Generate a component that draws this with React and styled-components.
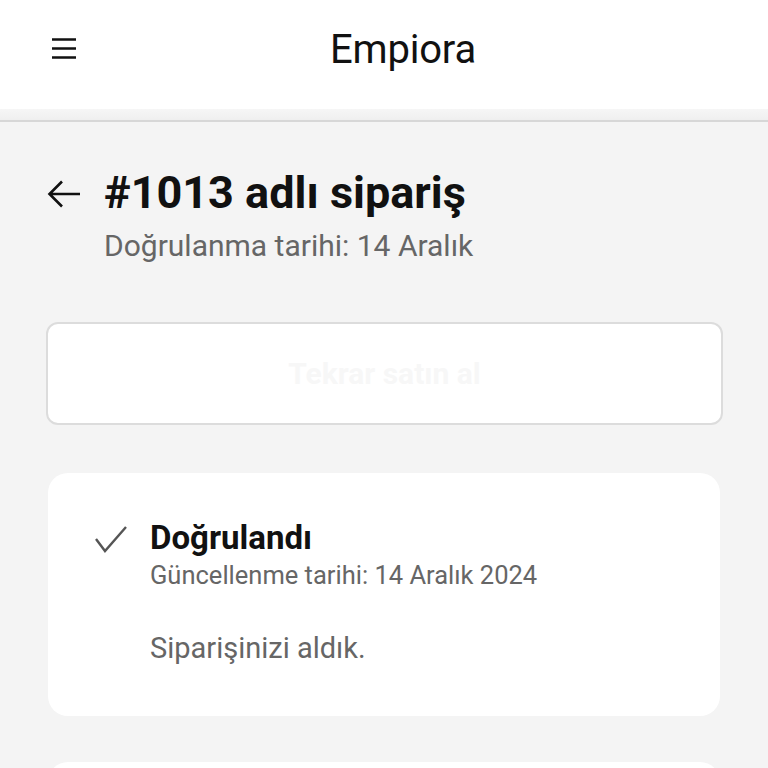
import React from "react";
import styled, { createGlobalStyle } from "styled-components";

const GlobalStyle = createGlobalStyle`
  html, body {
    margin: 0;
    padding: 0;
    background: #f4f4f4;
    font-family: Roboto, "Noto Sans", sans-serif;
  }
`;

const Page = styled.div`
  width: 768px;
  height: 768px;
  overflow: hidden;
  background: #f4f4f4;
`;

const Header = styled.header`
  height: 109px;
  background: #ffffff;
  display: flex;
  align-items: center;
  position: relative;
  .menu {
    position: absolute;
    left: 50px;
    top: 36px;
  }
`;

const Brand = styled.h1`
  margin: 0 auto;
  padding-left: 38px;
  padding-bottom: 10px;
  font-size: 40px;
  font-weight: 400;
  color: #111;
  letter-spacing: -0.2px;
`;

const HeaderEdge = styled.div`
  height: 11px;
  background: linear-gradient(#f6f6f6, #efefef);
  border-bottom: 2px solid #d7d7d7;
`;

const Content = styled.main`
  padding: 0 46px;
`;

const TitleRow = styled.div`
  display: flex;
  align-items: flex-start;
  gap: 22px;
  margin-top: 45px;
  svg {
    margin-top: 12px;
    flex: none;
  }
`;

const TitleBlock = styled.div`
  display: flex;
  flex-direction: column;
`;

const OrderTitle = styled.h2`
  margin: 0;
  font-size: 45px;
  font-weight: 700;
  line-height: 52px;
  color: #111;
`;

const OrderDate = styled.p`
  margin: 9px 0 0;
  font-size: 30px;
  line-height: 36px;
  color: #666;
`;

const BuyAgain = styled.button`
  display: block;
  width: 677px;
  height: 103px;
  margin-top: 58px;
  background: #ffffff;
  border: 2px solid #dcdcdc;
  border-radius: 12px;
  font-family: Roboto, sans-serif;
  font-size: 30px;
  font-weight: 700;
  color: #f7f7f7;
`;

const Card = styled.section`
  margin: ${(p) => p.$top}px 2px 0;
  background: #ffffff;
  border-radius: 20px;
  padding: ${(p) => (p.$empty ? "60px" : "45px 48px 51px 46px")};
`;

const StatusRow = styled.div`
  display: flex;
  gap: 22px;
  svg {
    margin-top: 7px;
    flex: none;
  }
`;

const StatusText = styled.div`
  display: flex;
  flex-direction: column;
`;

const StatusTitle = styled.h3`
  margin: 0;
  font-size: 33px;
  font-weight: 700;
  line-height: 40px;
  color: #111;
`;

const StatusDate = styled.p`
  margin: 1px 0 0;
  font-size: 25.5px;
  line-height: 32px;
  color: #666;
`;

const StatusNote = styled.p`
  margin: 40px 0 0;
  font-size: 29px;
  line-height: 34px;
  color: #666;
`;

export default function App() {
  return (
    <Page>
      <GlobalStyle />
      <Header>
        <svg className="menu" width="28" height="26" viewBox="0 0 28 26">
          <path d="M2 3.5h24M2 12.5h24M2 21.5h24" stroke="#111" strokeWidth="2.6" />
        </svg>
        <Brand>Empiora</Brand>
      </Header>
      <HeaderEdge />
      <Content>
        <TitleRow>
          <svg width="36" height="30" viewBox="0 0 36 30">
            <path
              d="M34 15H4M16 2.5L3.5 15 16 27.5"
              fill="none"
              stroke="#111"
              strokeWidth="2.6"
            />
          </svg>
          <TitleBlock>
            <OrderTitle>#1013 adlı sipariş</OrderTitle>
            <OrderDate>Doğrulanma tarihi: 14 Aralık</OrderDate>
          </TitleBlock>
        </TitleRow>
        <BuyAgain>Tekrar satın al</BuyAgain>
        <Card $top={48}>
          <StatusRow>
            <svg width="34" height="28" viewBox="0 0 34 28">
              <path d="M2 14l9 12L32 2" fill="none" stroke="#555" strokeWidth="2.4" />
            </svg>
            <StatusText>
              <StatusTitle>Doğrulandı</StatusTitle>
              <StatusDate>Güncellenme tarihi: 14 Aralık 2024</StatusDate>
              <StatusNote>Siparişinizi aldık.</StatusNote>
            </StatusText>
          </StatusRow>
        </Card>
        <Card $top={46} $empty />
      </Content>
    </Page>
  );
}
